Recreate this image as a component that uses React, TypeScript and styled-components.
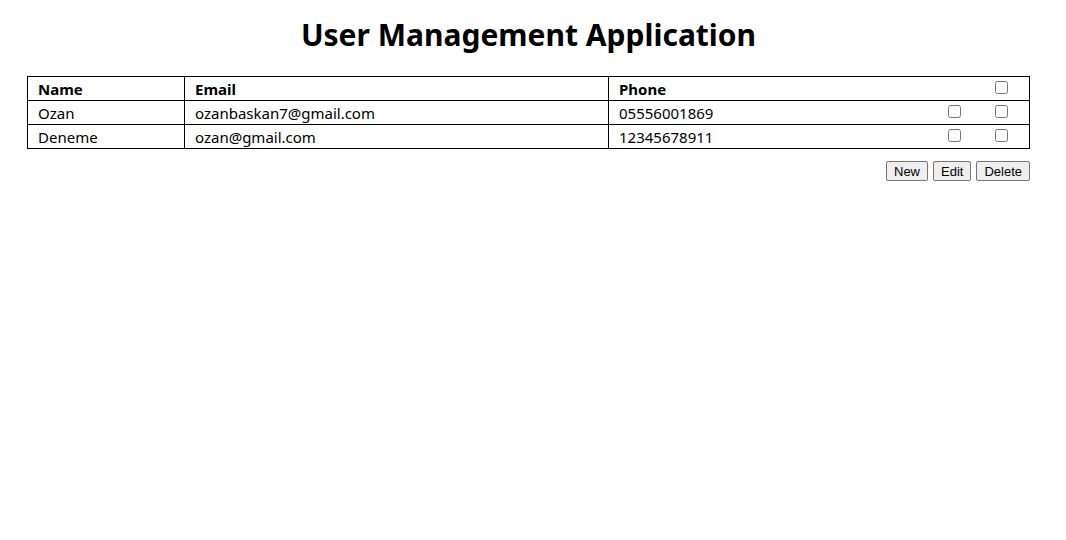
import styled, { createGlobalStyle } from 'styled-components'

interface User {
  name: string
  email: string
  phone: string
}

const users: User[] = [
  { name: 'Ozan', email: 'ozanbaskan7@gmail.com', phone: '05556001869' },
  { name: 'Deneme', email: 'ozan@gmail.com', phone: '12345678911' }
]

const GlobalStyle = createGlobalStyle`
  body {
    margin: 0;
    background: #fff;
    color: #000;
    font-family: "Noto Sans", "Open Sans", sans-serif;
  }
`

const Page = styled.div`
  padding: 0 36px 0 27px;
`

const Title = styled.h1`
  margin: 16px 0 22px;
  text-align: center;
  font-size: 30px;
  font-weight: 700;
  line-height: 38px;
`

const Table = styled.table`
  width: 100%;
  border-collapse: collapse;
  border: 1px solid #000;
  font-size: 15px;
`

const Row = styled.tr`
  height: 24px;
  border-bottom: 1px solid #000;
`

const Cell = styled.td<{ $width?: number; $head?: boolean }>`
  padding: 0 0 0 10px;
  width: ${({ $width }) => ($width ? `${$width}px` : 'auto')};
  border-right: 1px solid #000;
  font-weight: ${({ $head }) => ($head ? 700 : 400)};
  line-height: 22px;
  text-align: left;
  white-space: nowrap;
  vertical-align: middle;
`

const PhoneCell = styled(Cell)`
  border-right: none;
`

const CheckCell = styled.td`
  width: 26px;
  padding: 0 21px 0 0;
  text-align: right;
  vertical-align: top;
`

const Check = styled.input.attrs({ type: 'checkbox' })`
  width: 13px;
  height: 13px;
  margin: 4px 0 0 0;
`

const Actions = styled.div`
  display: flex;
  justify-content: flex-end;
  gap: 5px;
  margin-top: 12px;
`

const ActionButton = styled.button`
  font-family: "Liberation Sans", Arial, sans-serif;
  font-size: 13px;
  height: 20px;
  padding: 0 7px;
  color: #000;
  background: #efefef;
  border: 1px solid #767676;
  border-radius: 2px;
`

export default function App() {
  return (
    <Page>
      <GlobalStyle />
      <Title>User Management Application</Title>
      <Table>
        <tbody>
          <Row>
            <Cell $head $width={146}>Name</Cell>
            <Cell $head $width={413}>Email</Cell>
            <PhoneCell $head>Phone</PhoneCell>
            <CheckCell />
            <CheckCell>
              <Check />
            </CheckCell>
          </Row>
          {users.map((u) => (
            <Row key={u.email}>
              <Cell>{u.name}</Cell>
              <Cell>{u.email}</Cell>
              <PhoneCell>{u.phone}</PhoneCell>
              <CheckCell>
                <Check />
              </CheckCell>
              <CheckCell>
                <Check />
              </CheckCell>
            </Row>
          ))}
        </tbody>
      </Table>
      <Actions>
        <ActionButton>New</ActionButton>
        <ActionButton>Edit</ActionButton>
        <ActionButton>Delete</ActionButton>
      </Actions>
    </Page>
  )
}
